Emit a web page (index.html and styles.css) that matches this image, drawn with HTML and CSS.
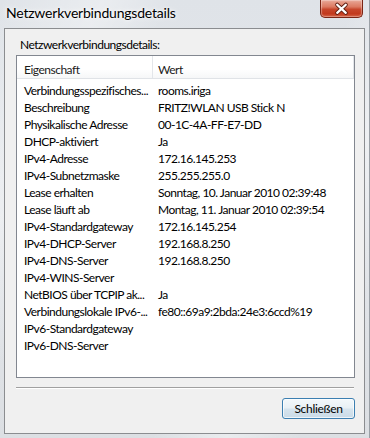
FILE: index.html
```html
<!DOCTYPE html>
<html lang="de">
<head>
<meta charset="utf-8">
<title>Netzwerkverbindungsdetails</title>
<link rel="stylesheet" href="styles.css">
</head>
<body>
<div class="window">
  <div class="titlebar">
    <div class="title">Netzwerkverbindungsdetails</div>
    <div class="close">
      <svg width="43" height="18" viewBox="0 0 43 18">
        <path d="M17 4.5 L26 13 M26 4.5 L17 13" stroke="#5b1c10" stroke-width="4.2" stroke-linecap="round" fill="none"/>
        <path d="M17 4.5 L26 13 M26 4.5 L17 13" stroke="#ffffff" stroke-width="2.4" stroke-linecap="round" fill="none"/>
      </svg>
    </div>
  </div>
  <div class="client">
    <div class="label">Netzwerkverbindungsdetails:</div>
    <div class="list">
      <div class="header">
        <div class="hcell c1">Eigenschaft</div>
        <div class="hcell c2">Wert</div>
      </div>
      <div class="rows">
        <div class="row"><span class="c1">Verbindungsspezifisches...</span><span class="c2">rooms.iriga</span></div>
        <div class="row"><span class="c1">Beschreibung</span><span class="c2">FRITZ!WLAN USB Stick N</span></div>
        <div class="row"><span class="c1">Physikalische Adresse</span><span class="c2">00-1C-4A-FF-E7-DD</span></div>
        <div class="row"><span class="c1">DHCP-aktiviert</span><span class="c2">Ja</span></div>
        <div class="row"><span class="c1">IPv4-Adresse</span><span class="c2">172.16.145.253</span></div>
        <div class="row"><span class="c1">IPv4-Subnetzmaske</span><span class="c2">255.255.255.0</span></div>
        <div class="row"><span class="c1">Lease erhalten</span><span class="c2">Sonntag, 10. Januar 2010 02:39:48</span></div>
        <div class="row"><span class="c1">Lease läuft ab</span><span class="c2">Montag, 11. Januar 2010 02:39:54</span></div>
        <div class="row"><span class="c1">IPv4-Standardgateway</span><span class="c2">172.16.145.254</span></div>
        <div class="row"><span class="c1">IPv4-DHCP-Server</span><span class="c2">192.168.8.250</span></div>
        <div class="row"><span class="c1">IPv4-DNS-Server</span><span class="c2">192.168.8.250</span></div>
        <div class="row"><span class="c1">IPv4-WINS-Server</span><span class="c2"></span></div>
        <div class="row"><span class="c1">NetBIOS über TCPIP ak...</span><span class="c2">Ja</span></div>
        <div class="row"><span class="c1">Verbindungslokale IPv6-...</span><span class="c2">fe80::69a9:2bda:24e3:6ccd%19</span></div>
        <div class="row"><span class="c1">IPv6-Standardgateway</span><span class="c2"></span></div>
        <div class="row"><span class="c1">IPv6-DNS-Server</span><span class="c2"></span></div>
      </div>
    </div>
    <div class="separator"></div>
    <div class="buttons">
      <button class="btn">Schließen</button>
    </div>
  </div>
</div>
</body>
</html>
```
FILE: styles.css
```css
html, body {
  margin: 0;
  padding: 0;
}
body {
  width: 370px;
  height: 438px;
  overflow: hidden;
  font-family: Lato, "Liberation Sans", sans-serif;
  font-size: 12px;
  letter-spacing: -0.5px;
  color: #000;
}
.window {
  box-sizing: border-box;
  width: 370px;
  height: 438px;
  display: flex;
  flex-direction: column;
  background:
    linear-gradient(115deg, rgba(255,255,255,0) 0%, rgba(255,255,255,0.35) 18%, rgba(255,255,255,0) 30%, rgba(255,255,255,0) 62%, rgba(255,255,255,0.4) 75%, rgba(255,255,255,0) 88%),
    linear-gradient(180deg, #dfe3e8 0%, #e4e7eb 40%, #dcdfe3 100%);
  border-right: 1px solid #9aa0a6;
}
.titlebar {
  height: 28px;
  display: flex;
  justify-content: space-between;
  align-items: flex-start;
  flex: none;
}
.title {
  padding: 4px 0 0 6px;
  font-size: 14px;
  line-height: 18px;
  letter-spacing: -0.2px;
  color: #000;
  text-shadow: 0 0 6px #fff, 0 0 3px #fff;
}
.close {
  width: 43px;
  height: 18px;
  margin-right: 6px;
  box-sizing: border-box;
  border: 1px solid #7a2515;
  border-top: none;
  border-radius: 0 0 5px 5px;
  background: linear-gradient(180deg, #e9a897 0%, #dc7a62 40%, #c7462b 55%, #c23a1e 80%, #d35a3c 100%);
  box-shadow: inset 0 0 1px 1px rgba(255,255,255,0.35);
  display: flex;
}
.close svg { display: block; }
.client {
  flex: 1;
  margin: 0 4px 4px 4px;
  border: 1px solid #8b8d90;
  background: #f0f0f0;
  padding: 8px 9px 0 11px;
  display: flex;
  flex-direction: column;
}
.label {
  height: 16px;
  line-height: 16px;
  padding-left: 4px;
  margin-bottom: 2px;
}
.list {
  box-sizing: border-box;
  height: 323px;
  border: 1px solid #828790;
  background: #fff;
  flex: none;
}
.header {
  display: grid;
  grid-template-columns: 136px 1fr;
  height: 23px;
  box-sizing: border-box;
  border-bottom: 1px solid #e0e3e7;
  background: linear-gradient(180deg, #ffffff 0%, #ffffff 60%, #f6f7f8 100%);
}
.hcell {
  padding-top: 6px;
  line-height: 16px;
  color: #1b1b1b;
}
.hcell.c1 {
  padding-left: 7px;
  border-right: 1px solid #e3e6ea;
}
.hcell.c2 {
  padding-left: 5px;
  border-right: 1px solid #e3e6ea;
}
.rows {
  padding-top: 3px;
}
.row {
  display: grid;
  grid-template-columns: 136px 1fr;
  height: 17px;
  line-height: 17px;
  white-space: nowrap;
}
.row .c1 {
  padding-left: 7px;
}
.row .c2 {
  padding-left: 5px;
}
.separator {
  margin-top: 9px;
  margin-right: 1px;
  height: 0;
  border-top: 1px solid #a0a0a0;
  border-bottom: 1px solid #ffffff;
}
.buttons {
  display: flex;
  justify-content: flex-end;
  margin-top: 9px;
}
.btn {
  width: 73px;
  height: 21px;
  box-sizing: border-box;
  border: 1px solid #3c7fb1;
  border-radius: 3px;
  background: linear-gradient(180deg, #f3f8fb 0%, #e8f0f5 48%, #d6e4ee 52%, #cadbe7 100%);
  box-shadow: inset 0 0 0 1px rgba(255,255,255,0.7);
  font-family: Lato, "Liberation Sans", sans-serif;
  font-size: 12px;
  letter-spacing: -0.3px;
  color: #000;
  padding: 0;
  line-height: 18px;
}
```
